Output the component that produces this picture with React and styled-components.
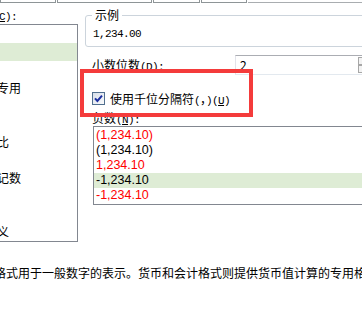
import React from "react";
import styled, { createGlobalStyle } from "styled-components";

const Global = createGlobalStyle`
  html, body { margin: 0; padding: 0; background: #fff; }
  body {
    font-family: "Noto Sans CJK SC", "Noto Sans", sans-serif;
    font-size: 12px;
    color: #000;
  }
`;

const Page = styled.div`
  position: relative;
  width: 362px;
  height: 324px;
  overflow: hidden;
  background: #fff;
`;

const TabStrip = styled.div`
  display: flex;
  gap: 1px;
  height: 3px;
`;

const Tab = styled.div`
  flex: 0 0 ${(p) => p.$w}px;
  box-sizing: border-box;
  border: 1px solid #8e9597;
  border-top: none;
`;

const TabRest = styled.div`
  flex: 1;
  border-bottom: 1px solid #a9adb0;
`;

const Main = styled.div`
  display: flex;
  align-items: flex-start;
  gap: 7px;
`;

const CategoryColumn = styled.div`
  flex: none;
  width: 106px;
  margin-left: -28px;
`;

const Latin = styled.span`
  font-family: "Liberation Mono", "DejaVu Sans Mono", monospace;
  font-size: 11px;
  letter-spacing: -0.6px;
`;

const FieldLabel = styled.div`
  font-size: 12px;
  line-height: 16px;
  height: 16px;
  white-space: nowrap;
  margin-top: ${(p) => p.$top || 0}px;
  margin-left: ${(p) => p.$indent || 0}px;
  flex: ${(p) => (p.$w ? `0 0 ${p.$w}px` : "none")};
`;

const CategoryList = styled.div`
  margin-top: 1px;
  box-sizing: border-box;
  height: 218px;
  border: 1px solid #828790;
  overflow: hidden;
`;

const CategoryRow = styled.div`
  height: 18px;
  line-height: 18px;
  white-space: nowrap;
  background: ${(p) => (p.$selected ? "#deecd5" : "transparent")};
`;

const RightColumn = styled.div`
  flex: none;
  width: 300px;
`;

const Group = styled.fieldset`
  margin: 5px 0 0 0;
  padding: 0 0 6px 6px;
  border: 1px solid #ccd4dc;
  border-radius: 3px;
  min-width: 0;
`;

const GroupTitle = styled.legend`
  padding: 0 3px;
  line-height: 14px;
  font-size: 12px;
`;

const Sample = styled.div`
  margin: 6px 0 0 1px;
  font-family: "Liberation Mono", "DejaVu Sans Mono", monospace;
  font-size: 11px;
  letter-spacing: -0.6px;
  line-height: 12px;
`;

const DecimalRow = styled.div`
  display: flex;
  align-items: center;
  height: 20px;
  margin-top: 8px;
`;

const Spin = styled.div`
  flex: none;
  display: flex;
  box-sizing: border-box;
  width: 141px;
  height: 20px;
  border: 1px solid;
  border-color: #abadb3 #dbdfe6 #e3e9ef #e2e3ea;
`;

const SpinValue = styled.div`
  flex: 1;
  padding-left: 4px;
  line-height: 18px;
`;

const SpinButtons = styled.div`
  flex: none;
  display: flex;
  flex-direction: column;
  width: 16px;
  margin: 1px;
`;

const SpinButton = styled.div`
  flex: 1;
  box-sizing: border-box;
  border: 1px solid #a7a7a7;
  background: #f3f3f3;
`;

const CheckRow = styled.div`
  display: flex;
  align-items: center;
  gap: 5px;
  height: 16px;
  margin: 15px 0 0 7px;
  white-space: nowrap;
  font-size: 12px;
`;

const Box = styled.svg`
  flex: none;
  display: block;
`;

const NegList = styled.div`
  margin-left: 8px;
  width: 290px;
  padding: 1px 0;
  border: 1px solid #828790;
`;

const NegRow = styled.div`
  height: 15px;
  line-height: 15px;
  padding-left: 2px;
  font-family: "Liberation Sans", Arial, sans-serif;
  font-size: 12.5px;
  color: ${(p) => (p.$red ? "#ff0000" : "#000")};
  background: ${(p) => (p.$selected ? "#deecd5" : "transparent")};
`;

const Description = styled.div`
  margin: 23px 0 0 -6px;
  line-height: 16px;
  white-space: nowrap;
`;

const Highlight = styled.div`
  position: absolute;
  left: 80px;
  top: 69px;
  width: 173px;
  height: 48px;
  box-sizing: border-box;
  border: 4px solid #f43b3b;
  pointer-events: none;
`;

const categories = [
  "常规",
  "数值",
  "货币",
  "会计专用",
  "日期",
  "时间",
  "百分比",
  "分数",
  "科学记数",
  "文本",
  "特殊",
  "自定义",
];

const negatives = [
  { text: "(1,234.10)", red: true },
  { text: "(1,234.10)", red: false },
  { text: "1,234.10", red: true },
  { text: "-1,234.10", red: false, selected: true },
  { text: "-1,234.10", red: true },
];

function CheckIcon() {
  return (
    <Box width="13" height="13" viewBox="0 0 13 13">
      <defs>
        <linearGradient id="cbg" x1="0" y1="0" x2="1" y2="1">
          <stop offset="0" stopColor="#d6dde8" />
          <stop offset="1" stopColor="#fbfcfd" />
        </linearGradient>
      </defs>
      <rect x="0.5" y="0.5" width="12" height="12" fill="url(#cbg)" stroke="#51708f" />
      <path d="M3 6.3 L5.4 9 L10 3.6" fill="none" stroke="#1c2fa0" strokeWidth="2" />
    </Box>
  );
}

export default function App() {
  return (
    <Page>
      <Global />
      <TabStrip>
        <Tab $w={56} />
        <Tab $w={95} />
        <Tab $w={47} />
        <Tab $w={46} />
        <TabRest />
      </TabStrip>
      <Main>
        <CategoryColumn>
          <FieldLabel $top={4} $indent={-3}>
            类别<Latin>(<u>C</u>):</Latin>
          </FieldLabel>
          <CategoryList>
            {categories.map((c) => (
              <CategoryRow key={c} $selected={c === "数值"}>
                {c}
              </CategoryRow>
            ))}
          </CategoryList>
        </CategoryColumn>
        <RightColumn>
          <Group>
            <GroupTitle>示例</GroupTitle>
            <Sample>1,234.00</Sample>
          </Group>
          <DecimalRow>
            <FieldLabel $indent={7} $w={143}>
              小数位数<Latin>(<u>D</u>):</Latin>
            </FieldLabel>
            <Spin>
              <SpinValue>2</SpinValue>
              <SpinButtons>
                <SpinButton />
                <SpinButton />
              </SpinButtons>
            </Spin>
          </DecimalRow>
          <CheckRow>
            <CheckIcon />
            <span>
              使用千位分隔符<Latin>(</Latin>，<Latin>)(<u>U</u>)</Latin>
            </span>
          </CheckRow>
          <FieldLabel $top={4} $indent={7}>
            负数<Latin>(<u>N</u>):</Latin>
          </FieldLabel>
          <NegList>
            {negatives.map((n, i) => (
              <NegRow key={i} $red={n.red} $selected={n.selected}>
                {n.text}
              </NegRow>
            ))}
          </NegList>
        </RightColumn>
      </Main>
      <Description>
        格式用于一般数字的表示。货币和会计格式则提供货币值计算的专用格式。
      </Description>
      <Highlight />
    </Page>
  );
}
